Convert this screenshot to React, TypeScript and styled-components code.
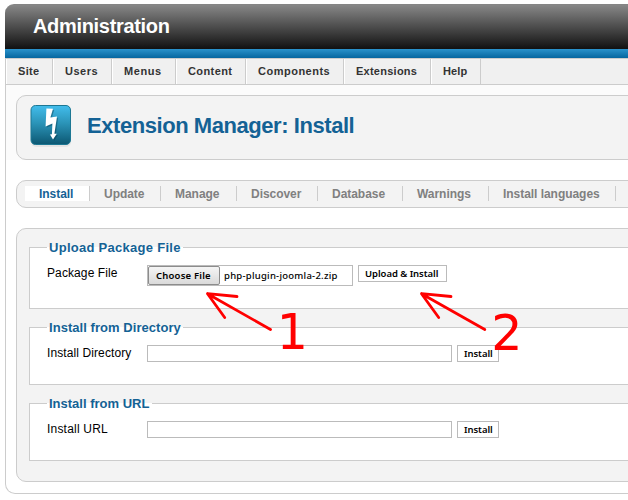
import React from "react";
import styled, { createGlobalStyle } from "styled-components";

const GlobalStyle = createGlobalStyle`
  * { box-sizing: border-box; }
  body {
    margin: 0;
    background: #fff;
    overflow: hidden;
    font-family: "Liberation Sans", Arial, sans-serif;
  }
`;

const Page = styled.div`
  position: relative;
  width: 628px;
  height: 500px;
  padding: 4px 0 0 5px;
  overflow: hidden;
`;

const Frame = styled.div`
  width: 660px;
  height: 490px;
  border-radius: 9px;
  display: flex;
  flex-direction: column;
`;

const Header = styled.header`
  height: 45px;
  flex: none;
  padding-left: 28px;
  border: 1px solid #858585;
  border-width: 1px 0 0;
  border-radius: 9px 9px 0 0;
  background: linear-gradient(#878787, #111);
  color: #fff;
  font-size: 20px;
  font-weight: bold;
  letter-spacing: -0.32px;
  line-height: 43px;
`;

const BlueBar = styled.div`
  height: 9px;
  flex: none;
  background: linear-gradient(#2a92cb, #06669f);
`;

const MenuBar = styled.nav`
  display: flex;
  flex: none;
  height: 27px;
  border: 1px solid #ccc;
  background: #f0f0f0;
`;

const MenuItem = styled.a<{ $w: number; $track: number }>`
  width: ${(p) => p.$w}px;
  padding-left: 11px;
  border-left: 1px solid #fff;
  border-right: 1px solid #ccc;
  color: #333;
  font-size: 11px;
  font-weight: bold;
  line-height: 24px;
  letter-spacing: ${(p) => p.$track}px;
  white-space: nowrap;
`;

const TitleArea = styled.div`
  flex: none;
  height: 75px;
  padding: 10px 0 0 10px;
  border-left: 1px solid #ccc;
  background: #fbfbfb;
`;

const TitleBox = styled.div`
  display: flex;
  width: 640px;
  height: 65px;
  padding: 8px 0 0 13px;
  border: 1px solid #ccc;
  border-radius: 10px;
  background: #f3f3f3;
`;

const Title = styled.h1`
  margin: 0 0 0 15px;
  color: #146295;
  font-size: 22px;
  font-weight: bold;
  line-height: 43px;
  letter-spacing: -0.44px;
  white-space: nowrap;
`;

const Content = styled.main`
  flex: 1;
  padding: 20px 0 0 10px;
  border: 1px solid #ccc;
  border-top: 0;
  border-radius: 0 0 10px 10px;
`;

const Tabs = styled.nav`
  display: flex;
  align-items: flex-start;
  width: 640px;
  height: 28px;
  padding: 5px 0 0 8px;
  border: 1px solid #ccc;
  border-radius: 10px;
  background: #f3f3f3;
`;

const Tab = styled.a<{ $w: number; $active?: boolean }>`
  width: ${(p) => p.$w}px;
  height: 15px;
  padding-left: 14px;
  border-right: 1px solid #ccc;
  background: ${(p) => (p.$active ? "#fff" : "transparent")};
  color: ${(p) => (p.$active ? "#146295" : "#808080")};
  font-size: 12px;
  font-weight: bold;
  line-height: 16px;
  letter-spacing: -0.04px;
  white-space: nowrap;
`;

const Panel = styled.form`
  width: 640px;
  height: 254px;
  margin-top: 20px;
  padding: 18px 0 0 12px;
  border: 1px solid #ccc;
  border-radius: 10px;
  background: #f3f3f3;
`;

const Group = styled.section<{ $h: number }>`
  width: 612px;
  height: ${(p) => p.$h}px;
  margin-bottom: 18px;
  border: 1px solid #ccc;
  background: #fff;
`;

const Legend = styled.h2<{ $track: number; $w: number }>`
  width: ${(p) => p.$w}px;
  height: 15px;
  margin: -8px 0 0 17px;
  padding-left: 2px;
  background: linear-gradient(#f3f3f3 7px, #fff 7px);
  color: #146295;
  font-size: 13px;
  font-weight: bold;
  line-height: 15px;
  letter-spacing: ${(p) => p.$track}px;
  white-space: nowrap;
`;

const Row = styled.div`
  display: flex;
  align-items: flex-start;
  padding: 10px 0 0 17px;
`;

const Label = styled.label<{ $track: number }>`
  width: 100px;
  font-size: 12px;
  line-height: 16px;
  letter-spacing: ${(p) => p.$track}px;
  white-space: nowrap;
  color: #000;
`;

const FileField = styled.div`
  display: flex;
  width: 206px;
  height: 21px;
  margin-right: 5px;
  border: 1px solid #bbb;
  background: #fff;
  font: 500 9.5px/20px "Noto Sans", sans-serif;
  letter-spacing: 0.25px;
  color: #000;
  white-space: nowrap;
`;

const ChooseButton = styled.span`
  width: 72px;
  height: 19px;
  margin-right: 4px;
  padding-left: 7px;
  border: 1px solid #8c8c8c;
  border-radius: 2px;
  background: linear-gradient(#f5f5f5, #dadada);
  font-weight: 600;
  line-height: 18px;
  letter-spacing: 0.2px;
`;

const TextField = styled.input`
  width: 305px;
  height: 17px;
  margin: 0 5px 0 0;
  padding: 0 3px;
  border: 1px solid #bbb;
  background: #fff;
`;

const Action = styled.button<{ $w: number }>`
  width: ${(p) => p.$w}px;
  height: 17px;
  margin: 0;
  padding: 0 0 0 6px;
  border: 1px solid #bbb;
  background: #fff;
  color: #000;
  font: 600 9.5px/15px "Noto Sans", sans-serif;
  letter-spacing: -0.05px;
  text-align: left;
  white-space: nowrap;
`;

const Annotations = styled.svg`
  position: absolute;
  left: 0;
  top: 0;
  pointer-events: none;
`;

const BOLT =
  "M16.4 4.4L23 4.7L20.4 13.4L27 12.6L24.4 29.8L26.8 29.8L23 35.6L20 30.4L21.9 30.2L22.4 19.5L15.6 22.4Z";

const BoltIcon = () => (
  <svg width="42" height="44" viewBox="0 0 42 44">
    <defs>
      <linearGradient id="tile" x1="0" y1="0" x2="0" y2="1">
        <stop offset="0" stopColor="#42bdec" />
        <stop offset="0.45" stopColor="#2b94b8" />
        <stop offset="1" stopColor="#0c5772" />
      </linearGradient>
    </defs>
    <rect x="1" y="3" width="40" height="40" rx="5" fill="#000" opacity="0.06" />
    <rect x="1" y="1.5" width="39.5" height="39" rx="4.5" fill="url(#tile)" stroke="#1d7793" />
    <path d={BOLT} fill="#063e52" opacity="0.45" transform="translate(1.2 1.2)" />
    <path d={BOLT} fill="#fff" />
  </svg>
);

const menu: [string, number, number][] = [
  ["Site", 47, 0.3],
  ["Users", 59, 0.5],
  ["Menus", 64, 0.6],
  ["Content", 70, 0.4],
  ["Components", 98, 0.5],
  ["Extensions", 87, 0.25],
  ["Help", 50, 0.15],
];

const tabs: [string, number][] = [
  ["Install", 65],
  ["Update", 71],
  ["Manage", 76],
  ["Discover", 81],
  ["Database", 85],
  ["Warnings", 86],
  ["Install languages", 127],
];

export default function App() {
  return (
    <Page>
      <GlobalStyle />
      <Frame>
        <Header>Administration</Header>
        <BlueBar />
        <MenuBar>
          {menu.map(([name, w, track]) => (
            <MenuItem key={name} $w={w} $track={track}>{name}</MenuItem>
          ))}
        </MenuBar>
        <TitleArea>
          <TitleBox>
            <BoltIcon />
            <Title>Extension Manager: Install</Title>
          </TitleBox>
        </TitleArea>
        <Content>
          <Tabs>
            {tabs.map(([name, w], i) => (
              <Tab key={name} $w={w} $active={i === 0}>{name}</Tab>
            ))}
          </Tabs>
          <Panel>
            <Group $h={62}>
              <Legend $w={136} $track={0.28}>Upload Package File</Legend>
              <Row>
                <Label $track={0.1}>Package File</Label>
                <FileField>
                  <ChooseButton>Choose File</ChooseButton>
                  php-plugin-joomla-2.zip
                </FileField>
                <Action type="button" $w={89}>Upload &amp; Install</Action>
              </Row>
            </Group>
            <Group $h={58}>
              <Legend $w={136} $track={0.05}>Install from Directory</Legend>
              <Row>
                <Label $track={0.1}>Install Directory</Label>
                <TextField />
                <Action type="button" $w={42}>Install</Action>
              </Row>
            </Group>
            <Group $h={58}>
              <Legend $w={105} $track={0}>Install from URL</Legend>
              <Row>
                <Label $track={0.2}>Install URL</Label>
                <TextField />
                <Action type="button" $w={42}>Install</Action>
              </Row>
            </Group>
          </Panel>
        </Content>
      </Frame>
      <Annotations width="628" height="500" viewBox="0 0 628 500">
        <g fill="none" stroke="#f00" strokeWidth="2.8" strokeLinecap="round" strokeLinejoin="round">
          <path d="M270.5 329.5L207.5 293.7M237 296.5L207.5 293.7L224.7 317.5" />
          <path d="M484.8 329.5L421.5 293.7M451 296.5L421.5 293.7L438.7 317.5" />
        </g>
        <g fill="#f00" fontFamily="DejaVu Sans" fontSize="49">
          <text x="276.7" y="349">1</text>
          <text x="491.3" y="350">2</text>
        </g>
      </Annotations>
    </Page>
  );
}
